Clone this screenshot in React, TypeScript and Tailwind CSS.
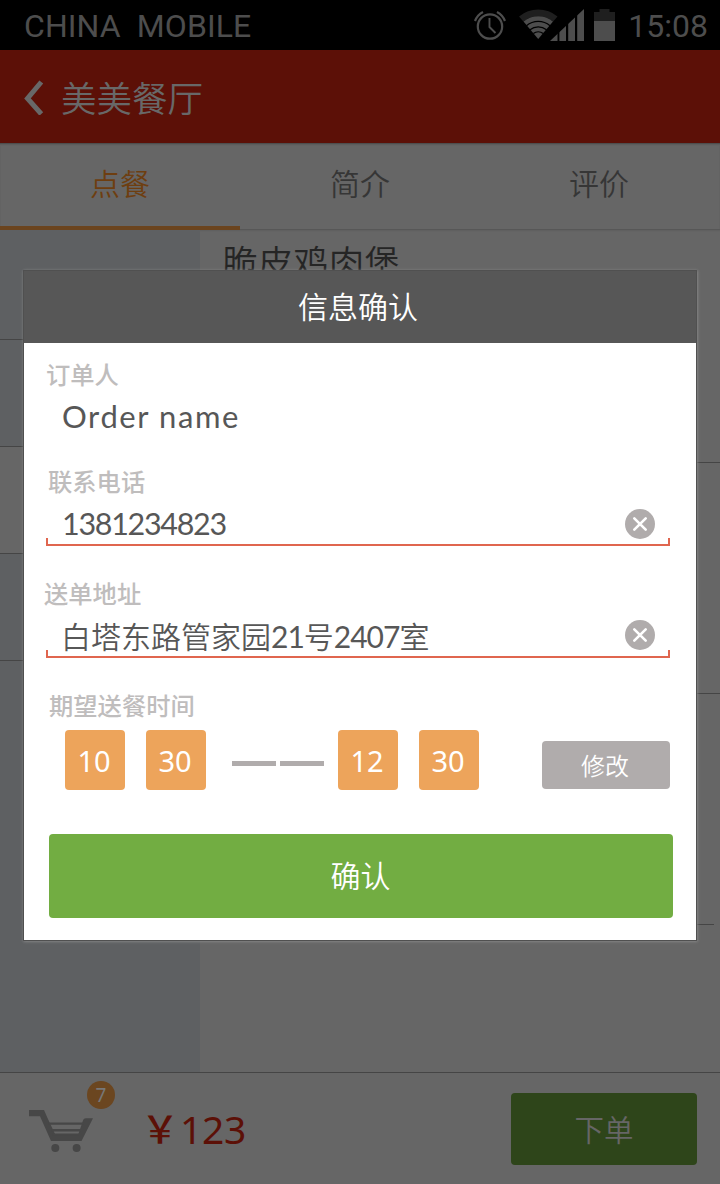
import type { ReactNode } from "react";

const CJK = "font-['Noto_Sans_CJK_SC',sans-serif]";

function AlarmIcon() {
  return (
    <svg width="34" height="32" viewBox="0 0 34 32" fill="none" stroke="#4d4d4d" strokeLinecap="butt">
      <circle cx="17" cy="17.500" r="12.2" strokeWidth="2.2" />
      <path d="M16.5 9v9l6 6" strokeWidth="1.9" />
      <path d="M2 12A17 17 0 0 1 10 3M32 12A17 17 0 0 0 24 3" strokeWidth="2.2" />
    </svg>
  );
}

function SignalIcons() {
  return (
    <svg width="66" height="34" viewBox="0 0 66 34">
      <path d="M0 8.5A30 30 0 0 1 38.500 8.500L34.200 13.500A23.500 23.500 0 0 0 4.300 13.500Z" fill="#1f1f1f" />
      <path d="M4.500 13.500A23.500 23.500 0 0 1 34 13.500L19.200 31Z" fill="#4d4d4d" />
      <g fill="none" stroke="#000" strokeWidth="1.300">
        <path d="M7.500 17.800A18 18 0 0 1 31 17.800" />
        <path d="M11 21.800A13 13 0 0 1 27.500 21.800" />
        <path d="M14.300 25.500A8 8 0 0 1 24.200 25.500" />
      </g>
      <path d="M31 33L65 1V33Z" fill="#4d4d4d" />
      <path d="M38.500 20h1.900v14H38.500zM47 12h2.200v22h-2.200zM56 4h2.200v30h-2.200z" fill="#000" />
    </svg>
  );
}

function BatteryIcon() {
  return (
    <svg width="21" height="32" viewBox="0 0 21 32">
      <path d="M0 3H5.500V0H15.500V3H21V12H0Z" fill="#1f1f1f" />
      <path d="M0 12H21V32H0Z" fill="#4d4d4d" />
    </svg>
  );
}

function CartIcon() {
  return (
    <svg width="64" height="43" viewBox="0 0 64 43" fill="#474747">
      <path d="M0 0H15L18.500 8L26.500 25H49L54 10.500C54.500 9 55.500 8.300 57 8.300H64L52.500 31H22L11 6.200H0Z" />
      <path d="M19 12.500h36v2.200H20zM22 19h30v2.500H23zM23 23.500h27v2H24z" />
      <circle cx="26.300" cy="38" r="4" />
      <circle cx="47.600" cy="38" r="4" />
    </svg>
  );
}

function ClearButton({ className = "" }: { className?: string }) {
  return (
    <button className={`h-[30px] w-[30px] ${className}`} aria-label="清除">
      <svg width="30" height="30" viewBox="0 0 30 30">
        <circle cx="15" cy="15" r="15" fill="#b0acac" />
        <path d="M9.300 9.300l11.400 11.400M20.700 9.300L9.300 20.700" stroke="#fff" strokeWidth="2.600" strokeLinecap="round" />
      </svg>
    </button>
  );
}

function Label({ children, className }: { children: ReactNode; className: string }) {
  return <div className={`${CJK} h-[30px] text-[24.300px] leading-[31px] font-medium text-[#bfbdbd] ${className}`}>{children}</div>;
}

function Field({ children }: { children: ReactNode }) {
  return (
    <div className="ml-[22px] w-[624px]">
      <div className="flex h-[38px] items-end justify-between pr-[15px] pl-[15px]">
        {children}
      </div>
      <div className="h-2 border-x-2 border-b-2 border-[#e0664f]" />
    </div>
  );
}

function TimeBox({ value, className = "" }: { value: string; className?: string }) {
  return (
    <div className={`h-[60px] w-[60px] rounded-[4px] bg-[#eda45b] pr-[2px] text-center font-['Noto_Sans',sans-serif] text-[29px] leading-[61px] text-white ${className}`}>
      {value}
    </div>
  );
}

function ConfirmDialog() {
  return (
    <section className="absolute top-[270px] left-[23px] h-[671px] w-[674px] border border-[#505050] bg-white shadow-[0_0_3px_0.500px_#909090]">
      <h2 className={`${CJK} h-[72px] bg-[#575757] pr-1 text-center text-[30px] leading-[68px] font-[350] text-white`}>信息确认</h2>
      <Label className="mt-[15px] ml-[22px]">订单人</Label>
      <div className="mt-[6px] ml-[38px] h-11 font-['Lato',sans-serif] text-[31px] leading-[44px] tracking-[1.600px] text-[#575757]">Order name</div>
      <Label className="mt-[27px] ml-[24px]">联系电话</Label>
      <div className="mt-[5px]">
        <Field>
          <span className="pl-px font-['Lato',sans-serif] text-[30.500px] leading-[30px] tracking-[-1.300px] text-[#575757]">1381234823</span>
          <ClearButton className="-mb-px" />
        </Field>
      </div>
      <Label className="mt-[31px] ml-[20px]">送单地址</Label>
      <div className="mt-[5px]">
        <Field>
          <span className={`${CJK} -mb-px text-[30px] leading-[30px] font-[350] whitespace-nowrap text-[#575757]`}>
            白塔东路管家园<span className="font-['Lato',sans-serif] font-normal tracking-[-1px]">21</span>号<span className="font-['Lato',sans-serif] font-normal tracking-[-1px]">2407</span>室
          </span>
          <ClearButton />
        </Field>
      </div>
      <Label className="mt-[31px] ml-[25px]">期望送餐时间</Label>
      <div className="mt-[11px] flex h-[60px] pl-[41px]">
        <TimeBox value="10" />
        <TimeBox value="30" className="ml-[21px]" />
        <div className="mt-[31px] ml-[26px] flex h-[5px] gap-1">
          <span className="w-11 bg-[#b0acac]" />
          <span className="w-11 bg-[#b0acac]" />
        </div>
        <TimeBox value="12" className="ml-[14px]" />
        <TimeBox value="30" className="ml-[21px]" />
        <button className={`${CJK} mt-[11px] ml-[63px] h-12 w-[128px] rounded-[4px] bg-[#b0acac] pr-[2px] pb-px text-[24px] leading-[44px] font-[350] text-white`}>修改</button>
      </div>
      <button className={`${CJK} mt-[44px] ml-[25px] block h-[84px] w-[624px] rounded-[4px] bg-[#72ad42] pr-px pb-[3px] text-[30px] leading-[81px] font-[350] text-white`}>确认</button>
    </section>
  );
}

export default function App() {
  return (
    <main className="relative flex h-[1184px] w-[720px] flex-col overflow-hidden bg-[#666]">
      <div className="flex h-[50px] shrink-0 items-center bg-black pr-3 pl-[24px] font-['Roboto',sans-serif] text-[32px] leading-[50px] text-[#4d4d4d]">
        <span className="w-[450px] pt-[2px] tracking-[0.080px] whitespace-pre">CHINA  MOBILE</span>
        <AlarmIcon />
        <span className="ml-[12px]"><SignalIcons /></span>
        <span className="ml-[9px]"><BatteryIcon /></span>
        <span className="ml-[13px] pt-[2px] whitespace-nowrap">15:08</span>
      </div>

      <header className="flex h-[93px] shrink-0 items-center bg-[#5c1007] pl-6">
        <svg width="20" height="36" viewBox="0 0 20 36" fill="none" stroke="#686868" strokeWidth="5">
          <path d="M17.300 3L3.500 19.500L17.300 35" />
        </svg>
        <h1 className={`${CJK} ml-[17px] text-[35.500px] leading-[93px] font-[350] text-[#686868]`}>美美餐厅</h1>
      </header>

      <nav className={`${CJK} grid h-[87px] shrink-0 grid-cols-3 border-b border-[#575757] text-center text-[30px] leading-[79px] font-[350] text-[#363636] shadow-[inset_0_2px_2px_-1px_#464646,0_1px_1px_#606060]`}>
        <span className="h-[87px] border-b-4 border-[#6b441e] text-[#6e3e10]">点餐</span>
        <span>简介</span>
        <span className="pr-[2px]">评价</span>
      </nav>

      <div className="flex h-[842px] shrink-0">
        <aside className="flex w-[200px] flex-col bg-[#5e6062]">
          <div className="h-[110px] border-b border-[#454545]" />
          <div className="h-[107px] border-b border-[#454545]" />
          <div className="h-[107px] border-b border-[#454545] bg-[#666]" />
          <div className="h-[107px] border-b border-[#454545]" />
        </aside>
        <div className="flex flex-1 flex-col">
          <div className={`${CJK} h-[233px] border-b border-[#454545] pl-[22px] text-[35.600px] leading-[61px] font-[350] text-[#252525]`}>脆皮鸡肉堡</div>
          <div className="h-[231px] border-b border-[#454545]" />
          <div className="mr-[6px] h-[231px] border-b border-[#454545]" />
        </div>
      </div>

      <footer className="flex h-[112px] shrink-0 border-t border-[#454545]">
        <div className="relative mt-[37px] ml-[29px] h-[43px] w-[64px]">
          <CartIcon />
          <span className="absolute -top-[29px] left-[58px] h-7 w-7 rounded-full bg-[#6b4620] text-center font-['Noto_Sans',sans-serif] text-[19px] leading-7 text-[#777]">7</span>
        </div>
        <div className="ml-[48px] flex w-[370px] font-['Noto_Sans',sans-serif] text-[39px] leading-[112px] text-[#5c1007]">
          <span className={`${CJK} -mt-[2px] w-[39px] text-[38px] font-medium`}>￥</span>
          <span className="tracking-[-0.300px]">123</span>
        </div>
        <button className={`${CJK} mt-5 h-[72px] w-[186px] rounded-[4px] bg-[#2e451a] pb-[2px] text-[29.500px] leading-[69px] font-[350] text-[#666]`}>下单</button>
      </footer>
      <ConfirmDialog />
    </main>
  );
}
